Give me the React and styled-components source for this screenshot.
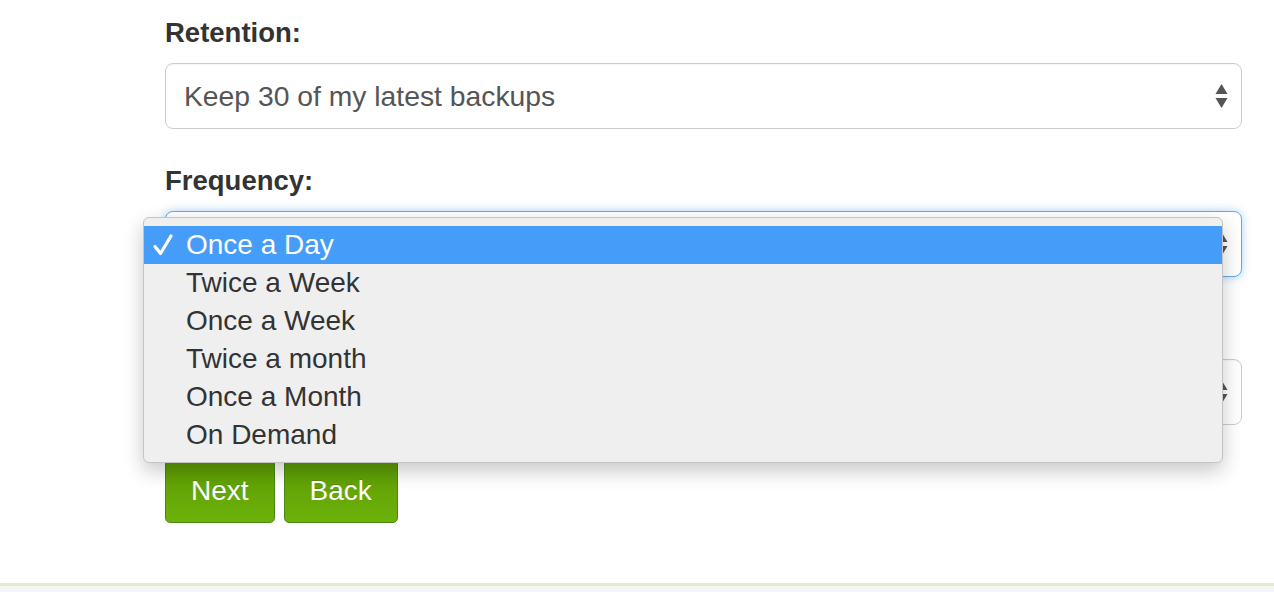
import React from 'react';
import styled, { createGlobalStyle } from 'styled-components';

const GlobalStyle = createGlobalStyle`
  html, body {
    margin: 0;
    padding: 0;
    background: #ffffff;
    font-family: "Liberation Sans", Arial, Helvetica, sans-serif;
  }
`;

const Page = styled.div`
  width: 1274px;
  height: 592px;
  display: flex;
  flex-direction: column;
  overflow: hidden;
`;

const Form = styled.form`
  padding: 17px 32px 0 165px;
  height: 583px;
  flex-shrink: 0;
  box-sizing: border-box;
`;

const Field = styled.div`
  position: relative;
  margin-bottom: ${(p) => (p.last ? 34 : 36)}px;
`;

const Label = styled.label`
  display: block;
  height: 32px;
  font-size: 27.5px;
  line-height: 32px;
  font-weight: bold;
  color: #333333;
  margin-bottom: 14px;
`;

const SelectBox = styled.div`
  height: 66px;
  box-sizing: border-box;
  display: flex;
  align-items: center;
  justify-content: space-between;
  padding: 0 13px 0 18px;
  border: 1px solid ${(p) => (p.focused ? '#66a9e6' : '#cccccc')};
  border-radius: 8px;
  background: #ffffff;
  box-shadow: ${(p) =>
    p.focused
      ? '0 0 10px rgba(102, 175, 233, 0.55)'
      : 'inset 0 1px 1px rgba(0, 0, 0, 0.04)'};
  font-size: 28.3px;
  color: #555555;
`;

const Arrows = () => (
  <svg width="13" height="26" viewBox="0 0 13 26">
    <polygon points="6.5,1 12.5,11 0.5,11" fill="#555555" />
    <polygon points="0.5,15 12.5,15 6.5,25" fill="#555555" />
  </svg>
);

const CheckMark = () => (
  <svg width="20" height="22" viewBox="0 0 20 22">
    <path
      d="M2 12.5 L7.5 19.5 L18 2"
      fill="none"
      stroke="#ffffff"
      strokeWidth="3.2"
      strokeLinecap="round"
      strokeLinejoin="round"
    />
  </svg>
);

const Popup = styled.ul`
  position: absolute;
  left: -22px;
  top: 52px;
  width: 1080px;
  margin: 0;
  padding: 8px 0;
  box-sizing: border-box;
  list-style: none;
  background: #efefef;
  border: 1px solid #c4c4c4;
  border-radius: 6px;
  box-shadow: 0 8px 20px rgba(0, 0, 0, 0.22);
  z-index: 10;
`;

const Option = styled.li`
  display: flex;
  align-items: center;
  height: 38px;
  font-size: 28px;
  color: ${(p) => (p.selected ? '#ffffff' : '#333333')};
  background: ${(p) => (p.selected ? '#469cf9' : 'transparent')};
`;

const Check = styled.span`
  display: flex;
  align-items: center;
  width: 42px;
  padding-left: 9px;
  box-sizing: border-box;
`;

const ButtonRow = styled.div`
  display: flex;
  gap: 9px;
`;

const Button = styled.button`
  height: 64px;
  padding: 0 ${(p) => p.pad}px;
  border: 1px solid #4a8712;
  border-radius: 5px;
  background: linear-gradient(#5c9b04, #6db20a);
  color: #ffffff;
  font-family: "Liberation Sans", Arial, sans-serif;
  font-size: 28px;
  text-shadow: 0 -1px 0 rgba(0, 0, 0, 0.15);
  cursor: pointer;
`;

const Footer = styled.div`
  flex: 1;
  border-top: 3px solid #deecc9;
  background: #f5f5f5;
`;

const frequencies = [
  'Once a Day',
  'Twice a Week',
  'Once a Week',
  'Twice a month',
  'Once a Month',
  'On Demand',
];

const App = () => {
  return (
    <Page>
      <GlobalStyle />
      <Form onSubmit={(e) => e.preventDefault()}>
        <Field>
          <Label>Retention:</Label>
          <SelectBox>
            <span>Keep 30 of my latest backups</span>
            <Arrows />
          </SelectBox>
        </Field>

        <Field>
          <Label>Frequency:</Label>
          <SelectBox focused>
            <span>Once a Day</span>
            <Arrows />
          </SelectBox>
          <Popup>
            {frequencies.map((f, i) => (
              <Option key={f} selected={i === 0}>
                <Check>{i === 0 && <CheckMark />}</Check>
                {f}
              </Option>
            ))}
          </Popup>
        </Field>

        {/* third field sits fully under the open menu */}
        <Field last>
          <Label />
          <SelectBox>
            <span />
            <Arrows />
          </SelectBox>
        </Field>

        <ButtonRow>
          <Button pad={25}>Next</Button>
          <Button pad={25}>Back</Button>
        </ButtonRow>
      </Form>
      <Footer />
    </Page>
  );
};

export default App;
